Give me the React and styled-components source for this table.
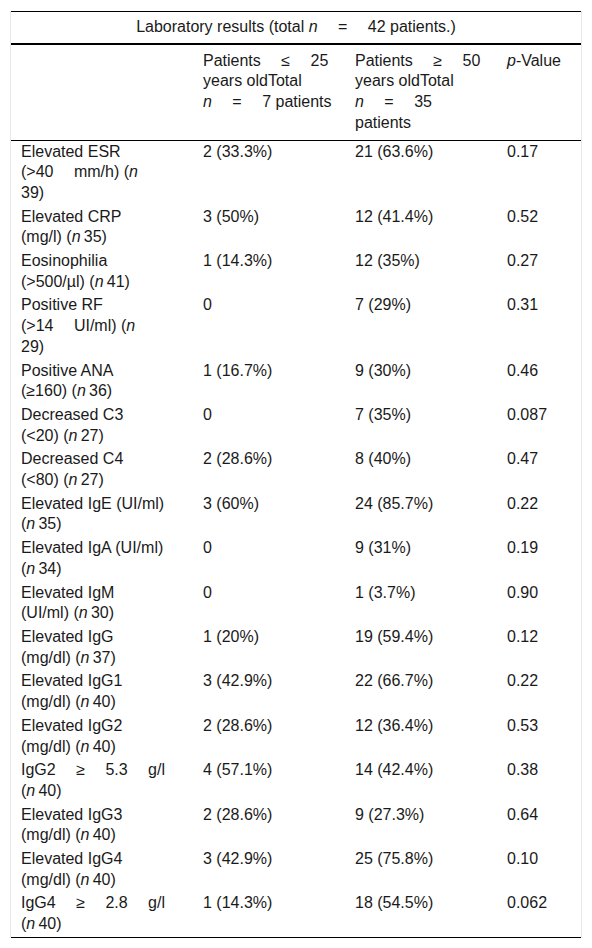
import React from "react";
import styled, { createGlobalStyle } from "styled-components";

const GlobalStyle = createGlobalStyle`
  html, body { margin: 0; padding: 0; background: #fff; }
  body { font-family: "Liberation Sans", Arial, Helvetica, sans-serif; color: #1a1a1a; }
`;

const Page = styled.div`
  padding: 11px 0 11px 10px;
`;

const Frame = styled.div`
  width: 570px;
  border-left: 1px solid #e8e8e8;
  border-right: 1px solid #e8e8e8;
`;

const Table = styled.table`
  width: 100%;
  border-collapse: separate;
  border-spacing: 0;
  table-layout: fixed;
  font-size: 16px;
  line-height: 20.7px;
  border-top: 1px solid #000;
  border-bottom: 1px solid #000;
`;

const Col = styled.col`
  width: ${(p) => p.$w}px;
`;

const TitleCell = styled.th`
  font-weight: normal;
  text-align: center;
  padding: 5px 10px 5px;
  border-bottom: 2px solid #000;
  white-space: nowrap;
`;

const HeadCell = styled.th`
  font-weight: normal;
  text-align: left;
  vertical-align: top;
  padding: 6px 10px 6px;
  border-bottom: 1px solid #000;
  white-space: nowrap;
`;

const Cell = styled.td`
  text-align: left;
  vertical-align: top;
  padding: 1px 10px 2px;
  white-space: nowrap;
`;

const Em = styled.i`
  font-style: italic;
`;

const G = "\u00a0\u2003";
const T = "\u2009";
const N = () => <Em>n</Em>;

const rows = [
  {
    label: (<>Elevated ESR<br />(&gt;40{G}mm/h) (<N /><br />39)</>),
    a: "2 (33.3%)", b: "21 (63.6%)", p: "0.17",
  },
  { label: (<>Elevated CRP<br />(mg/l) (<N />{T}35)</>), a: "3 (50%)", b: "12 (41.4%)", p: "0.52" },
  { label: (<>Eosinophilia<br />(&gt;500/µl) (<N />{T}41)</>), a: "1 (14.3%)", b: "12 (35%)", p: "0.27" },
  {
    label: (<>Positive RF<br />(&gt;14{G}UI/ml) (<N /><br />29)</>),
    a: "0", b: "7 (29%)", p: "0.31",
  },
  { label: (<>Positive ANA<br />(≥160) (<N />{T}36)</>), a: "1 (16.7%)", b: "9 (30%)", p: "0.46" },
  { label: (<>Decreased C3<br />(&lt;20) (<N />{T}27)</>), a: "0", b: "7 (35%)", p: "0.087" },
  { label: (<>Decreased C4<br />(&lt;80) (<N />{T}27)</>), a: "2 (28.6%)", b: "8 (40%)", p: "0.47" },
  { label: (<>Elevated IgE (UI/ml)<br />(<N />{T}35)</>), a: "3 (60%)", b: "24 (85.7%)", p: "0.22" },
  { label: (<>Elevated IgA (UI/ml)<br />(<N />{T}34)</>), a: "0", b: "9 (31%)", p: "0.19" },
  { label: (<>Elevated IgM<br />(UI/ml) (<N />{T}30)</>), a: "0", b: "1 (3.7%)", p: "0.90" },
  { label: (<>Elevated IgG<br />(mg/dl) (<N />{T}37)</>), a: "1 (20%)", b: "19 (59.4%)", p: "0.12" },
  { label: (<>Elevated IgG1<br />(mg/dl) (<N />{T}40)</>), a: "3 (42.9%)", b: "22 (66.7%)", p: "0.22" },
  { label: (<>Elevated IgG2<br />(mg/dl) (<N />{T}40)</>), a: "2 (28.6%)", b: "12 (36.4%)", p: "0.53" },
  { label: (<>IgG2{G}≥{G}5.3{G}g/l<br />(<N />{T}40)</>), a: "4 (57.1%)", b: "14 (42.4%)", p: "0.38" },
  { label: (<>Elevated IgG3<br />(mg/dl) (<N />{T}40)</>), a: "2 (28.6%)", b: "9 (27.3%)", p: "0.64" },
  { label: (<>Elevated IgG4<br />(mg/dl) (<N />{T}40)</>), a: "3 (42.9%)", b: "25 (75.8%)", p: "0.10" },
  { label: (<>IgG4{G}≥{G}2.8{G}g/l<br />(<N />{T}40)</>), a: "1 (14.3%)", b: "18 (54.5%)", p: "0.062" },
];

export default function App() {
  return (
    <>
      <GlobalStyle />
      <Page>
        <Frame>
          <Table>
            <colgroup>
              <Col $w={182} />
              <Col $w={152} />
              <Col $w={152} />
              <Col $w={84} />
            </colgroup>
            <thead>
              <tr>
                <TitleCell colSpan={4}>
                  Laboratory results (total <N />{G}={G}42 patients.)
                </TitleCell>
              </tr>
              <tr>
                <HeadCell />
                <HeadCell>
                  Patients{G}≤{G}25<br />years oldTotal<br /><N />{G}={G}7 patients
                </HeadCell>
                <HeadCell>
                  Patients{G}≥{G}50<br />years oldTotal<br /><N />{G}={G}35<br />patients
                </HeadCell>
                <HeadCell>
                  <Em>p</Em>-Value
                </HeadCell>
              </tr>
            </thead>
            <tbody>
              {rows.map((r, i) => (
                <tr key={i}>
                  <Cell>{r.label}</Cell>
                  <Cell>{r.a}</Cell>
                  <Cell>{r.b}</Cell>
                  <Cell>{r.p}</Cell>
                </tr>
              ))}
            </tbody>
          </Table>
        </Frame>
      </Page>
    </>
  );
}
